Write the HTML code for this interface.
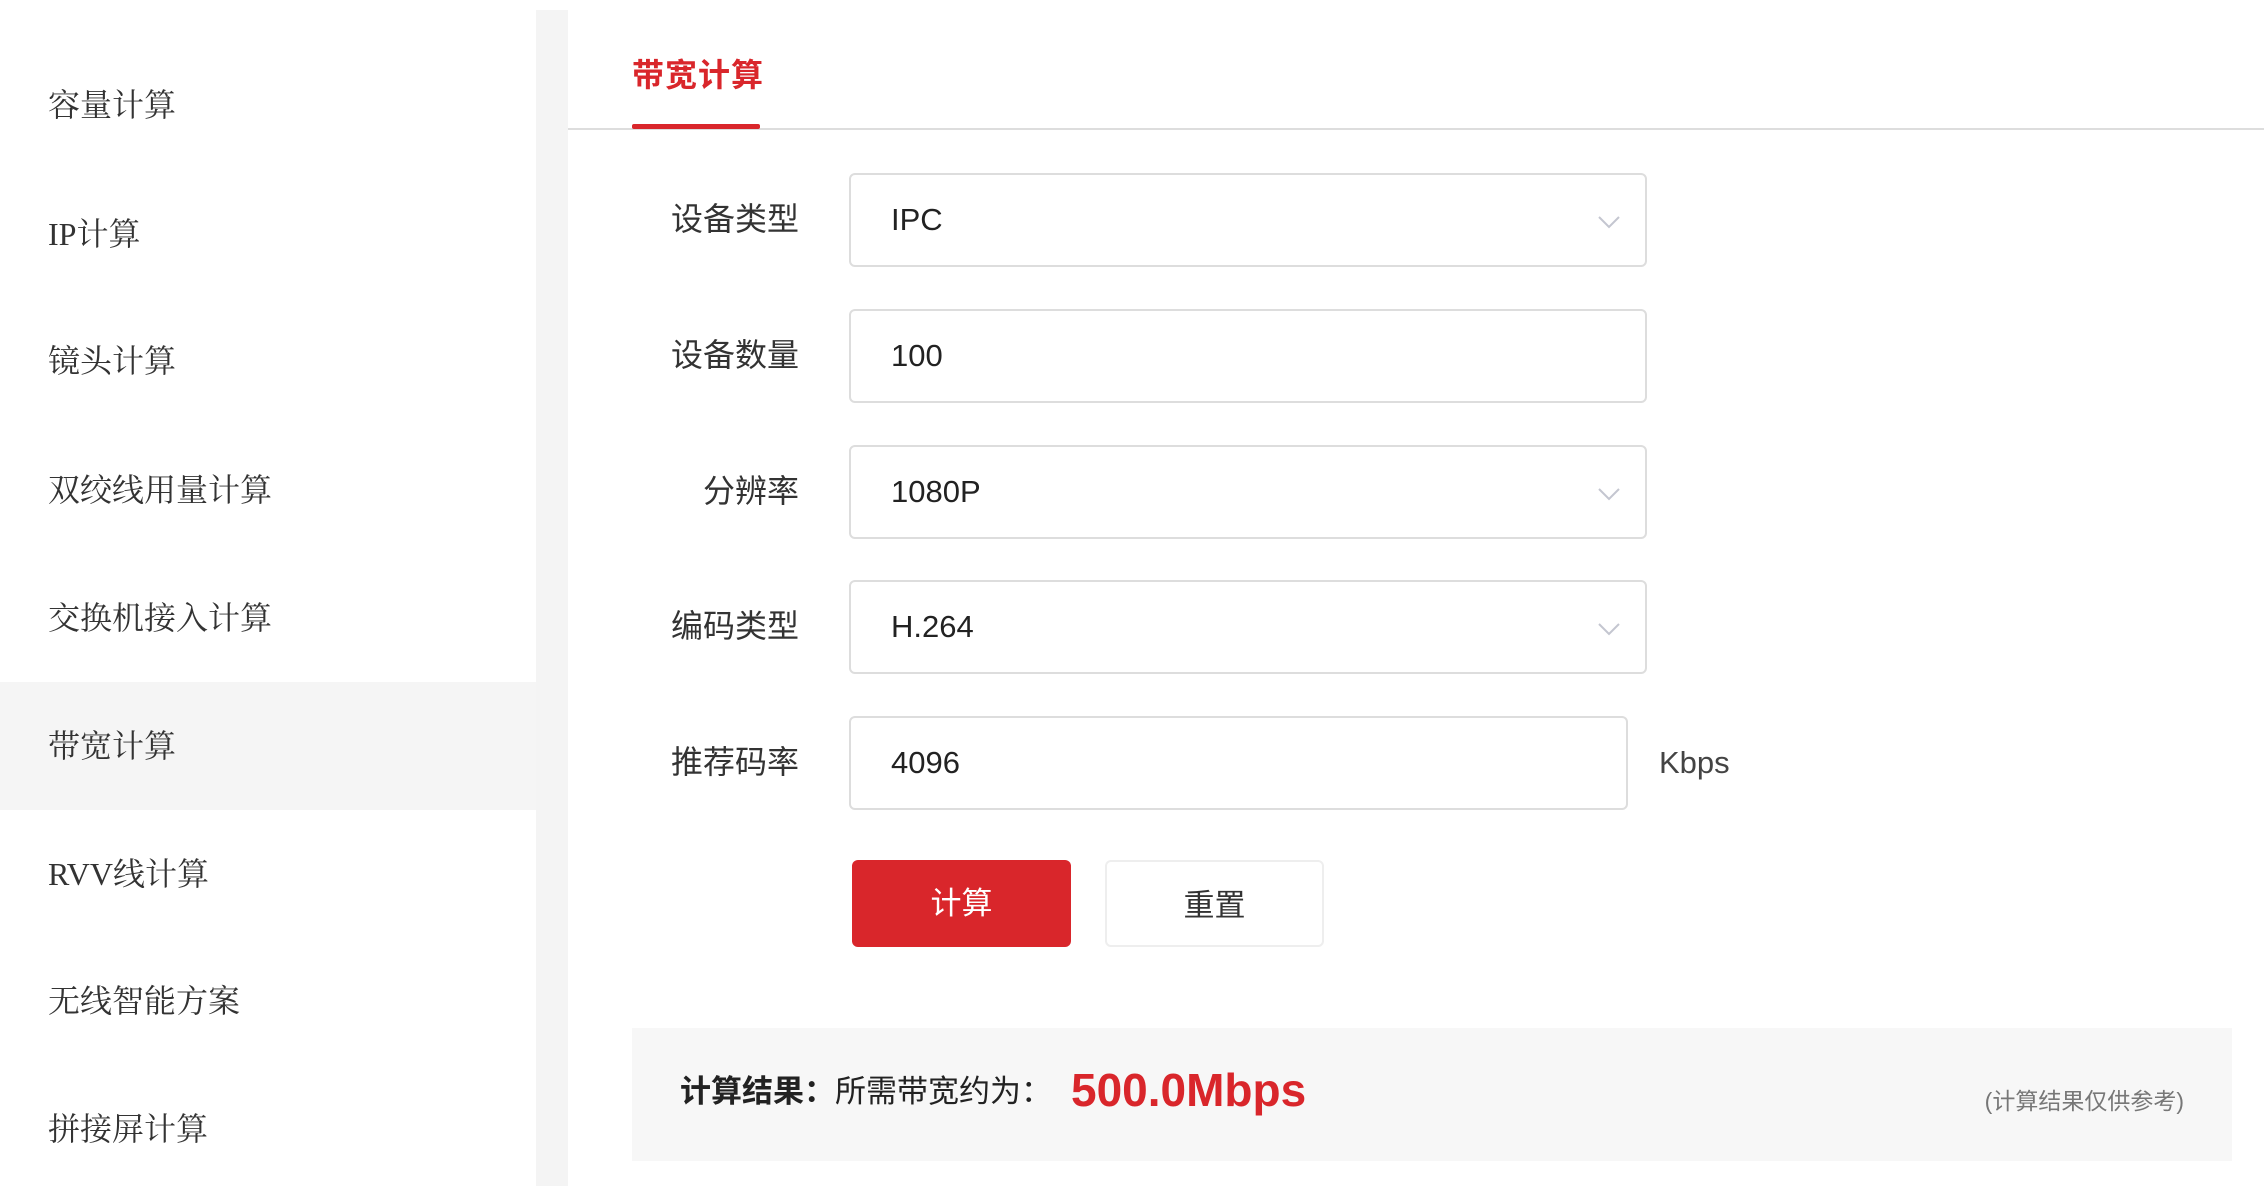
<!DOCTYPE html>
<html><head><meta charset="utf-8"><style>
*{margin:0;padding:0;box-sizing:border-box}
body{width:2264px;height:1186px;background:#fff;position:relative;overflow:hidden;font-family:"Liberation Sans","Noto Sans CJK SC",sans-serif;color:#333}
.side{position:absolute;left:0;top:0;width:536px;height:1186px;background:#fff}
.strip{position:absolute;left:536px;top:10px;width:32px;height:1176px;background:#f4f4f4}
.item{position:absolute;left:0;width:536px;height:128px;line-height:128px;padding-left:48px;font-family:"Liberation Serif","Noto Serif CJK SC",serif;font-size:32px;color:#333}
.item.act{background:#f5f5f5}
.tab{position:absolute;left:632px;top:50px;font-size:32px;font-weight:bold;color:#d9262b;letter-spacing:1px}
.tabline{position:absolute;left:632px;top:124px;width:128px;height:5px;background:#d9262b;border-radius:2px}
.div{position:absolute;left:568px;top:128px;right:0;height:2px;background:#ddd}
.lab{position:absolute;right:1465px;font-size:32px;color:#333;line-height:93px}
.inp{position:absolute;left:849px;width:798px;height:94px;border:2px solid #ddd;border-radius:6px;padding-left:40px;line-height:90px;font-size:31px;color:#222}
.chev{position:absolute;right:24px;top:40px}
.kbps{position:absolute;left:1659px;top:745px;font-size:31px;color:#444}
.btn{position:absolute;top:860px;height:87px;width:219px;border-radius:6px;font-size:31px;text-align:center;line-height:87px}
.res{position:absolute;left:632px;top:1028px;width:1600px;height:133px;background:#f7f7f7}
</style></head><body>
<div class="side">
<div class="item" style="top:41px">容量计算</div>
<div class="item" style="top:170px">IP计算</div>
<div class="item" style="top:297px">镜头计算</div>
<div class="item" style="top:426px">双绞线用量计算</div>
<div class="item" style="top:554px">交换机接入计算</div>
<div class="item act" style="top:682px">带宽计算</div>
<div class="item" style="top:810px">RVV线计算</div>
<div class="item" style="top:937px">无线智能方案</div>
<div class="item" style="top:1065px">拼接屏计算</div>
</div>
<div class="strip"></div>
<div class="tab">带宽计算</div>
<div class="div"></div>
<div class="tabline"></div>

<div class="lab" style="top:173px">设备类型</div>
<div class="inp" style="top:173px">IPC<svg class="chev" width="24" height="14" viewBox="0 0 24 14"><path d="M2 2 L12 12 L22 2" fill="none" stroke="#c4c6d0" stroke-width="2"/></svg></div>
<div class="lab" style="top:309px">设备数量</div>
<div class="inp" style="top:309px">100</div>
<div class="lab" style="top:445px">分辨率</div>
<div class="inp" style="top:445px">1080P<svg class="chev" width="24" height="14" viewBox="0 0 24 14"><path d="M2 2 L12 12 L22 2" fill="none" stroke="#c4c6d0" stroke-width="2"/></svg></div>
<div class="lab" style="top:580px">编码类型</div>
<div class="inp" style="top:580px">H.264<svg class="chev" width="24" height="14" viewBox="0 0 24 14"><path d="M2 2 L12 12 L22 2" fill="none" stroke="#c4c6d0" stroke-width="2"/></svg></div>
<div class="lab" style="top:716px">推荐码率</div>
<div class="inp" style="top:716px;width:779px">4096</div>
<div class="kbps">Kbps</div>

<div class="btn" style="left:852px;background:#d9262b;color:#fff">计算</div>
<div class="btn" style="left:1105px;border:2px solid #eee;color:#333">重置</div>

<div class="res">
<div style="position:absolute;left:48px;top:42px;font-size:31px;line-height:44px;color:#222"><b>计算结果：</b>所需带宽约为：</div>
<div style="position:absolute;left:439px;top:32px;font-size:46px;font-weight:bold;color:#d9262b;line-height:60px">500.0Mbps</div>
<div style="position:absolute;right:48px;top:54px;font-size:23px;color:#777">(计算结果仅供参考)</div>
</div>
</body></html>
